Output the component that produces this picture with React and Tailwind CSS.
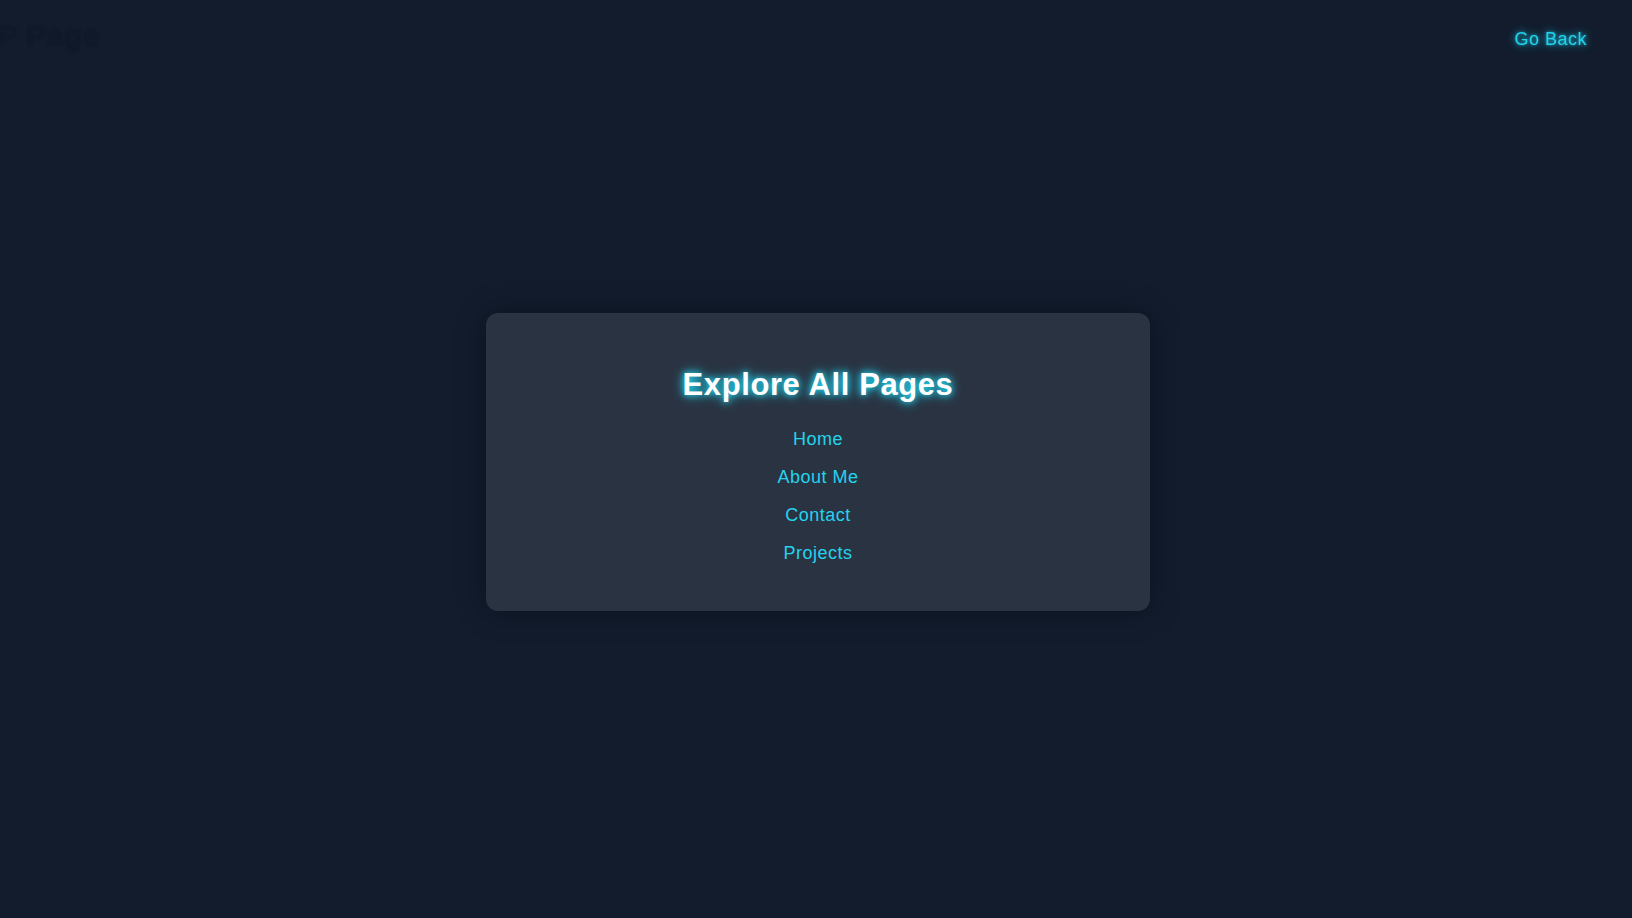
export default function App() {
  const links = ["Home", "About Me", "Contact", "Projects"];
  return (
    <div
      className="relative h-screen w-full overflow-hidden bg-[#121c2d] tracking-[0.5px]"
      style={{ fontFamily: '"Liberation Sans", Arial, sans-serif' }}
    >
      <header className="fixed inset-x-0 top-0 flex items-start justify-between">
        <h1 className="-ml-[119px] mt-[18px] whitespace-nowrap text-[30px] font-bold leading-9 text-[#0f1929] [text-shadow:0_0_3px_rgba(0,0,0,0.2)]">
          SITEMAP Page
        </h1>
        <a
          href="#"
          className="mr-[45px] mt-[25px] text-lg leading-7 text-[#22d3ee] [text-shadow:0_0_8px_rgba(34,211,238,0.9),0_0_3px_rgba(34,211,238,0.6)]"
        >
          Go Back
        </a>
      </header>
      <main className="flex h-full items-center justify-center pt-[6px] pl-[4px]">
        <div className="w-[664px] rounded-xl bg-[#2a3342] pt-[54px] pb-[44px] text-center shadow-[0_0_30px_rgba(0,0,0,0.35)]">
          <h2 className="mb-[22px] text-[31px] font-bold leading-9 tracking-[0.6px] text-white [text-shadow:0_0_12px_#22d3ee,0_0_6px_#22d3ee]">
            Explore All Pages
          </h2>
          <ul className="flex flex-col items-center gap-[10px]">
            {links.map((l) => (
              <li key={l}>
                <a href="#" className="text-lg leading-7 text-[#22d3ee]">
                  {l}
                </a>
              </li>
            ))}
          </ul>
        </div>
      </main>
    </div>
  );
}
